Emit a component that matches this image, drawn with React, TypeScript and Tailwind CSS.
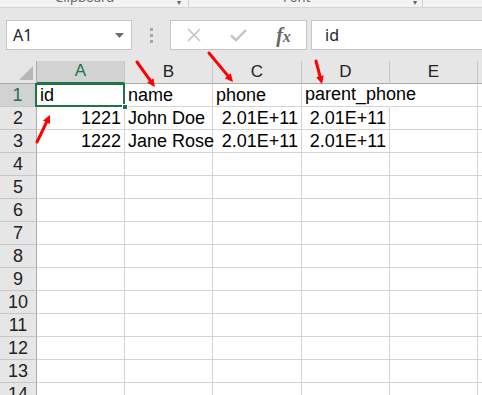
import React from "react";

const cols = ["A", "B", "C", "D", "E", ""];

type Cell = { text: string; right?: boolean; spill?: boolean };

const data: Record<number, Cell[]> = {
  1: [{ text: "id" }, { text: "name" }, { text: "phone" }, { text: "parent_phone", spill: true }],
  2: [
    { text: "1221", right: true },
    { text: "John Doe" },
    { text: "2.01E+11", right: true },
    { text: "2.01E+11", right: true },
  ],
  3: [
    { text: "1222", right: true },
    { text: "Jane Rose" },
    { text: "2.01E+11", right: true },
    { text: "2.01E+11", right: true },
  ],
};

const rows = Array.from({ length: 14 }, (_, i) => i + 1);

const Arrow = ({ x1, y1, x2, y2 }: { x1: number; y1: number; x2: number; y2: number }) => {
  const a = Math.atan2(y2 - y1, x2 - x1);
  const l = 9;
  const w = 0.45;
  const p1 = [x2 - l * Math.cos(a - w), y2 - l * Math.sin(a - w)];
  const p2 = [x2 - l * Math.cos(a + w), y2 - l * Math.sin(a + w)];
  return (
    <g>
      <line x1={x1} y1={y1} x2={x2 - 4 * Math.cos(a)} y2={y2 - 4 * Math.sin(a)} stroke="#ff0000" strokeWidth="3" strokeLinecap="round" />
      <polygon points={`${x2},${y2} ${p1[0]},${p1[1]} ${p2[0]},${p2[1]}`} fill="#ff0000" />
    </g>
  );
};

export default function App() {
  return (
    <div className="relative w-[482px] h-[395px] overflow-hidden bg-white font-['Liberation_Sans',Arial,sans-serif]">
      {/* ribbon remains */}
      <div className="relative h-[8px] bg-[#f3f3f3] border-b border-[#d5d5d5] text-[#666] text-[13px] font-['Noto_Sans',sans-serif]">
        <span className="absolute left-[55px] top-[-11px] leading-[16px]">Clipboard</span>
        <span className="absolute left-[177px] top-[-4px] text-[8px]">▾</span>
        <div className="absolute left-[188px] top-0 h-[7px] w-px bg-[#d0d0d0]" />
        <span className="absolute left-[283px] top-[-11px] leading-[16px]">Font</span>
        <span className="absolute left-[413px] top-[-4px] text-[8px]">▾</span>
        <div className="absolute left-[422px] top-0 h-[7px] w-px bg-[#d0d0d0]" />
      </div>

      {/* formula bar */}
      <div className="h-[53px] bg-[#e6e6e6] flex items-start pt-[12px] font-['Noto_Sans',sans-serif]">
        <div className="ml-[6px] w-[126px] h-[30px] bg-white border border-[#c6c6c6] flex items-center justify-between pl-[6px] pr-[7px]">
          <span className="text-[16px] text-[#222]">A1</span>
          <svg width="9" height="5" viewBox="0 0 9 5">
            <polygon points="0,0 9,0 4.5,5" fill="#6d6d6d" />
          </svg>
        </div>
        <div className="w-[38px] h-[30px] flex flex-col items-center justify-center gap-[3px]">
          <div className="w-[3px] h-[3px] bg-[#a6a6a6]" />
          <div className="w-[3px] h-[3px] bg-[#a6a6a6]" />
          <div className="w-[3px] h-[3px] bg-[#a6a6a6]" />
        </div>
        <div className="w-[137px] h-[30px] bg-white border border-[#c6c6c6] flex items-center">
          <div className="w-[45px] flex justify-center">
            <svg width="14" height="14" viewBox="0 0 14 14">
              <path d="M1 1 L13 13 M13 1 L1 13" stroke="#c4c4c4" strokeWidth="1.6" />
            </svg>
          </div>
          <div className="w-[45px] flex justify-center">
            <svg width="17" height="14" viewBox="0 0 17 14">
              <path d="M1 7.5 L6 12 L16 2" stroke="#c4c4c4" strokeWidth="2.4" fill="none" />
            </svg>
          </div>
          <div className="w-[45px] flex justify-center">
            <span className="font-['Liberation_Serif',serif] italic font-bold text-[20px] text-[#666] leading-none">
              f<span className="text-[16px]">x</span>
            </span>
          </div>
        </div>
        <div className="ml-[4px] flex-1 h-[30px] bg-white border border-[#c6c6c6] border-r-0 flex items-center pl-[13px]">
          <span className="text-[16px] text-[#222]">id</span>
        </div>
      </div>

      {/* grid */}
      <div className="grid grid-cols-[37px_88px_88px_89px_88px_88px_1fr] auto-rows-[23px] text-[18px] leading-[20px] text-black">
        <div className="relative bg-[#e6e6e6] border-r border-b border-[#ababab]">
          <svg className="absolute right-[3px] bottom-[3px]" width="14" height="14" viewBox="0 0 14 14">
            <polygon points="14,0 14,14 0,14" fill="#b7b7b7" />
          </svg>
        </div>
        {cols.map((c, i) => (
          <div
            key={"h" + i}
            className={`flex items-end justify-center pb-[1px] border-r border-b text-[17px] ${
              c === "A"
                ? "bg-[#d2d2d2] border-r-[#c6c6c6] border-b-[#217346] border-b-2 text-[#217346]"
                : "bg-[#e6e6e6] border-[#c6c6c6] border-b-[#ababab] text-[#222]"
            }`}
          >
            {c}
          </div>
        ))}
        {rows.map((r) => (
          <React.Fragment key={r}>
            <div
              className={`flex items-end justify-center pb-[1px] border-b border-r ${
                r === 1
                  ? "bg-[#d2d2d2] text-[#217346] border-b-[#c6c6c6] border-r-[#217346] border-r-2"
                  : "bg-[#e6e6e6] border-b-[#c6c6c6] border-r-[#ababab] text-[#222]"
              }`}
            >
              {r}
            </div>
            {cols.map((_, ci) => {
              const cell = data[r]?.[ci];
              const selected = r === 1 && ci === 0;
              return (
                <div
                  key={ci}
                  className={`relative flex items-end pb-[1px] whitespace-nowrap overflow-visible border-b border-[#d4d4d4] pl-[3px] pr-[3px] ${
                    cell?.right ? "justify-end" : "justify-start"
                  } ${cell?.spill ? "border-r-0 mr-px" : "border-r"}`}
                >
                  {cell && (
                    <span className={`relative z-[1] ${cell.spill ? "bg-white pb-[1px]" : ""}`}>{cell.text}</span>
                  )}
                  {selected && (
                    <>
                      <div className="absolute left-[-2px] top-[-1px] right-[-1px] bottom-[-1px] border-2 border-[#217346] z-[2]" />
                      <div className="absolute right-[-4px] bottom-[-4px] w-[6px] h-[6px] bg-[#217346] border border-white z-[3]" />
                    </>
                  )}
                </div>
              );
            })}
          </React.Fragment>
        ))}
      </div>

      {/* annotations */}
      <svg className="absolute inset-0 pointer-events-none" width="482" height="395">
        <Arrow x1={37} y1={142} x2={50} y2={115} />
        <Arrow x1={137} y1={62} x2={155} y2={87} />
        <Arrow x1={209} y1={53} x2={233} y2={82} />
        <Arrow x1={316} y1={61} x2={322} y2={84} />
      </svg>
    </div>
  );
}
